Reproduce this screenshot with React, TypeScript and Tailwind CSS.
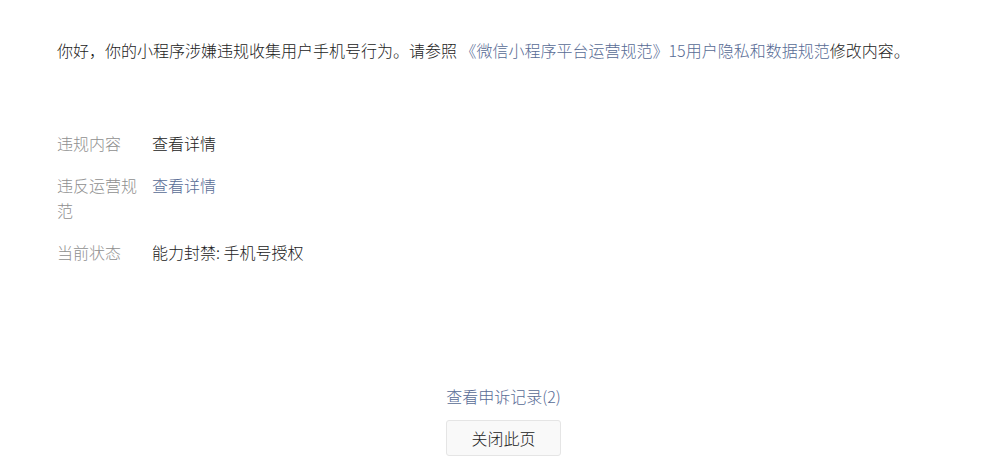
import React from "react";

export default function App() {
  const font = { fontFamily: '"Noto Sans CJK SC", "Noto Sans", sans-serif' };
  return (
    <div className="w-[994px] h-[466px] bg-white text-[16px] leading-[25px] font-light text-[#222222] overflow-hidden" style={font}>
      <div className="pt-[38px] pl-[57px] pr-[44px]">
        <p>
          你好，你的小程序涉嫌违规收集用户手机号行为。请参照{" "}
          <span className="text-[#576b95]">《微信小程序平台运营规范》15用户隐私和数据规范</span>修改内容。
        </p>
        <div className="mt-[68px] flex flex-col gap-[17px]">
          <div className="flex">
            <div className="w-[95px] shrink-0 pr-[12px] text-[#8f8f8f]">违规内容</div>
            <div>查看详情</div>
          </div>
          <div className="flex">
            <div className="w-[95px] shrink-0 pr-[12px] text-[#8f8f8f]">违反运营规范</div>
            <div className="text-[#576b95]">查看详情</div>
          </div>
          <div className="flex">
            <div className="w-[95px] shrink-0 pr-[12px] text-[#8f8f8f]">当前状态</div>
            <div>能力封禁: 手机号授权</div>
          </div>
        </div>
        <div className="mt-[119px] flex flex-col items-center">
          <div className="text-[#576b95]">查看申诉记录(2)</div>
          <button className="mt-[11px] w-[115px] h-[36px] rounded-[3px] border border-[#e5e5e5] bg-[#f9f9f9] text-[16px] font-light text-[#222222]" style={font}>
            关闭此页
          </button>
        </div>
      </div>
    </div>
  );
}
